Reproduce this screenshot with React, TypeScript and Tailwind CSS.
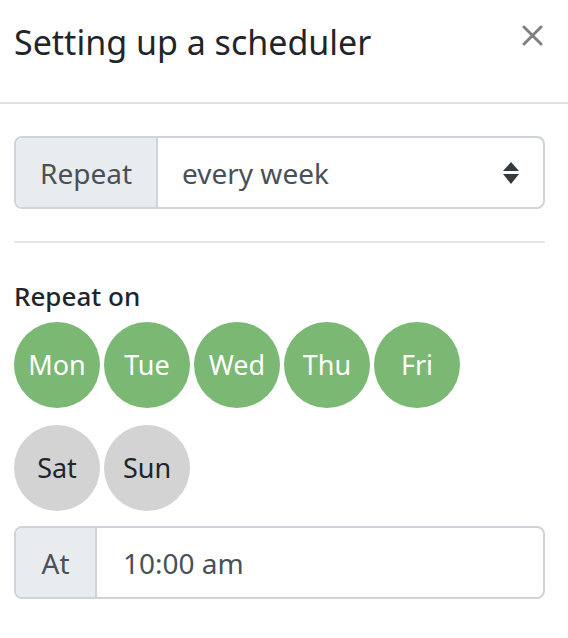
import React from 'react';

const days = [
  { label: 'Mon', on: true },
  { label: 'Tue', on: true },
  { label: 'Wed', on: true },
  { label: 'Thu', on: true },
  { label: 'Fri', on: true },
  { label: 'Sat', on: false },
  { label: 'Sun', on: false },
];

export default function App() {
  return (
    <div
      className="w-[568px] h-[638px] bg-white text-[#212529]"
      style={{ fontFamily: '"Noto Sans", "Open Sans", sans-serif' }}
    >
      {/* header */}
      <div className="flex h-[104px] items-start justify-between border-b-2 border-[#dee2e6] px-[14px] pt-[18px]">
        <h3 className="text-[34px] leading-[48px] font-normal">Setting up a scheduler</h3>
        <button className="mt-[7px] mr-[11px] text-[#808080]">
          <svg width="21" height="21" viewBox="0 0 21 21">
            <path d="M2 2 L19 19 M19 2 L2 19" stroke="currentColor" strokeWidth="3" strokeLinecap="round" />
          </svg>
        </button>
      </div>

      <div className="pl-[14px] pr-[23px] pt-[32px]">
        {/* repeat select */}
        <div className="flex h-[73px] rounded-[8px] border-2 border-[#ced4da] overflow-hidden">
          <div className="flex w-[142px] items-center justify-center border-r-2 border-[#ced4da] bg-[#e9ecef] text-[28px] text-[#495057]">
            Repeat
          </div>
          <div className="flex flex-1 items-center justify-between pl-[24px] pr-[24px] text-[28px] text-[#495057]">
            <span>every week</span>
            <svg width="16" height="22" viewBox="0 0 16 22">
              <path d="M8 0 L16 9 L0 9 Z M0 12 L16 12 L8 22 Z" fill="#343a40" />
            </svg>
          </div>
        </div>

        <div className="mt-[32px] h-[2px] bg-[#e6e6e6]"></div>

        <div className="mt-[38px] text-[26px] leading-[30px] font-medium">Repeat on</div>

        <div className="mt-[11px] flex w-[460px] flex-wrap gap-x-[4px] gap-y-[17px]">
          {days.map((d) => (
            <div
              key={d.label}
              className={`flex h-[86px] w-[86px] items-center justify-center rounded-full text-[27px] ${
                d.on ? 'bg-[#7ab874] text-white' : 'bg-[#d3d3d3] text-[#212529]'
              }`}
            >
              {d.label}
            </div>
          ))}
        </div>

        {/* time */}
        <div className="mt-[15px] flex h-[73px] rounded-[8px] border-2 border-[#ced4da] overflow-hidden">
          <div className="flex w-[81px] items-center justify-center border-r-2 border-[#ced4da] bg-[#e9ecef] text-[28px] text-[#495057]">
            At
          </div>
          <div className="flex flex-1 items-center pl-[26px] text-[28px] text-[#495057]">10:00 am</div>
        </div>
      </div>
    </div>
  );
}
